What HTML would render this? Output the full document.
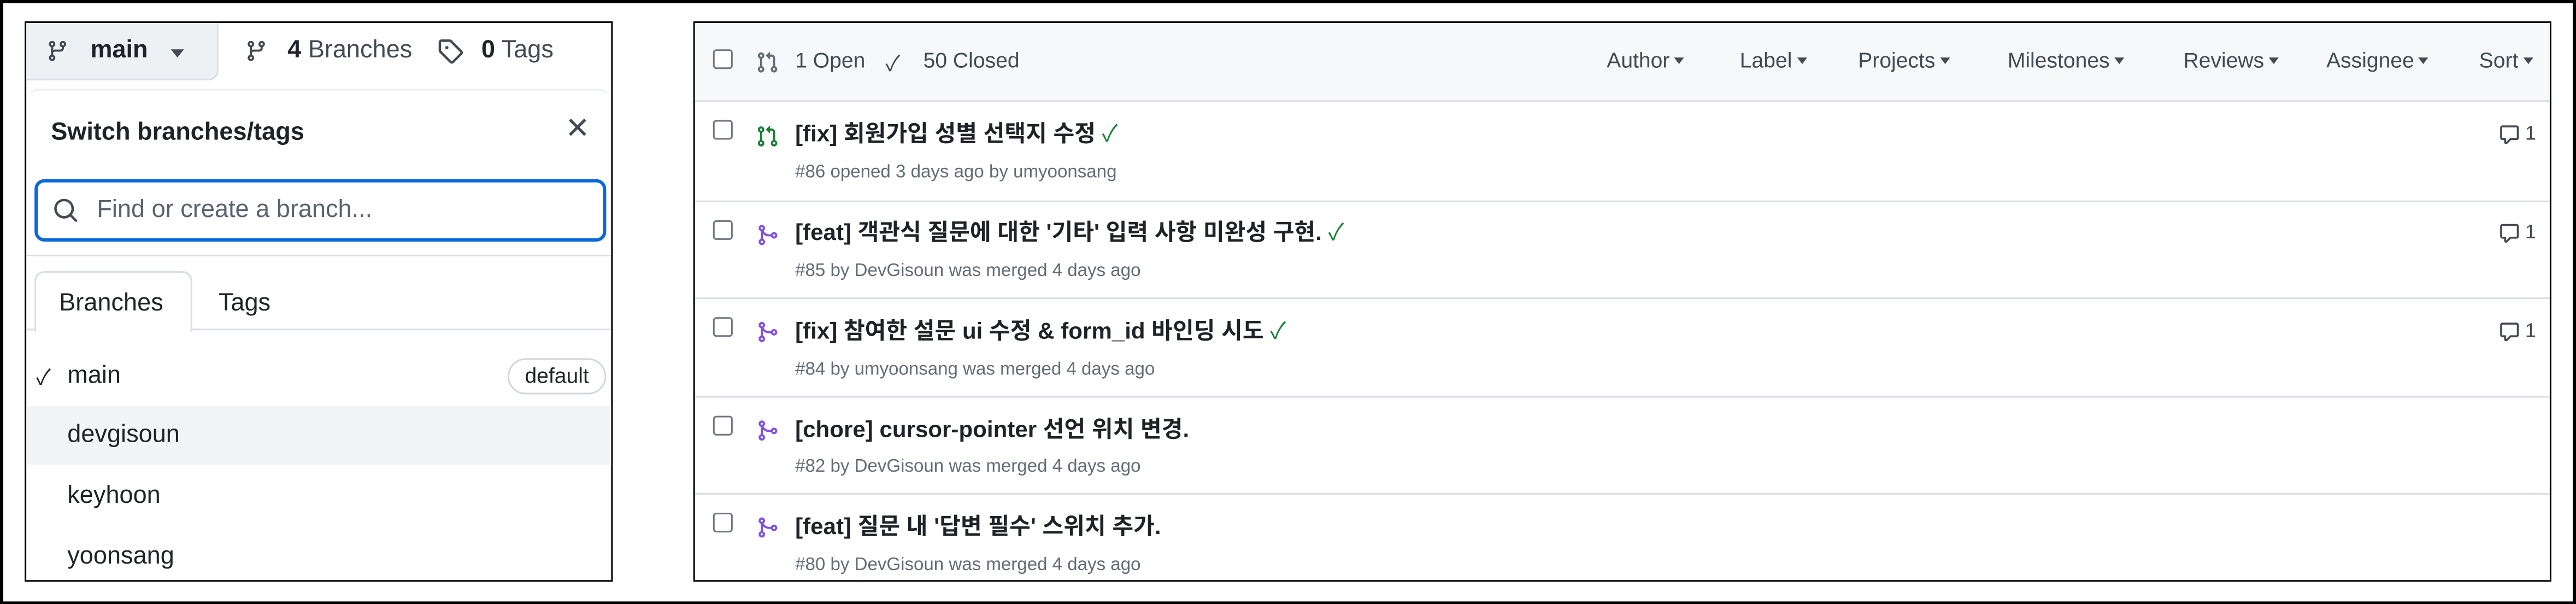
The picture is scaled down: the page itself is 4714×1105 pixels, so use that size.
<!DOCTYPE html>
<html><head><meta charset="utf-8"><style>
html,body{margin:0;padding:0;background:#fff;}
body{width:4714px;height:1105px;overflow:hidden;position:relative;}
#s{position:absolute;left:0;top:0;width:1568px;height:367.6px;transform:scale(3.0064);transform-origin:0 0;font-family:"Liberation Sans","Noto Sans CJK KR",sans-serif;color:#1f2328;}
.a{position:absolute;white-space:nowrap;}
.frame{position:absolute;left:0;top:0;width:1564px;height:363.6px;border:2px solid #000;}
.box{position:absolute;border:1px solid #000;background:#fff;overflow:hidden;}
.cb{position:absolute;width:10px;height:10px;border:1px solid #6e7781;border-radius:2px;background:#fff;}
.t{font-size:14px;font-weight:bold;}
.m{font-size:11px;color:#636c76;}
.f{font-size:13px;color:#424a53;}
.f:after{content:"";display:inline-block;margin-left:3px;border-left:3.5px solid transparent;border-right:3.5px solid transparent;border-top:4px solid #424a53;vertical-align:2px;}
.hr{position:absolute;left:0;right:0;height:1px;background:#d8dee4;}
.ok{color:#1a7f37;font-weight:normal;}
</style></head><body><div id="s">
<div class="frame"></div>

<!-- left panel -->
<div class="box" style="left:15px;top:13px;width:356px;height:339px;">
  <div class="a" style="left:0;top:0;width:116px;height:34px;background:#eef1f4;border-radius:0 0 6px 0;border:1px solid #d8dee4;border-top:none;border-left:none;"></div>
  <svg class="a" style="left:12px;top:9px" width="14" height="16" viewBox="0 0 16 16"><path fill="#424a53" d="M9.5 3.25a2.25 2.25 0 1 1 3 2.122V6A2.5 2.5 0 0 1 10 8.5H6a1 1 0 0 0-1 1v1.128a2.251 2.251 0 1 1-1.5 0V5.372a2.25 2.25 0 1 1 1.5 0v1.836A2.493 2.493 0 0 1 6 7h4a1 1 0 0 0 1-1v-.628A2.25 2.25 0 0 1 9.5 3.25Zm-6 0a.75.75 0 1 0 1.5 0 .75.75 0 0 0-1.5 0Zm8.25-.75a.75.75 0 1 0 0 1.5.75.75 0 0 0 0-1.5ZM4.25 12a.75.75 0 1 0 0 1.5.75.75 0 0 0 0-1.5Z"/></svg>
  <div class="a" style="left:39px;top:8px;font-size:15px;font-weight:bold;">main</div>
  <div class="a" style="left:88px;top:16px;border-left:4px solid transparent;border-right:4px solid transparent;border-top:5px solid #424a53;"></div>
  <svg class="a" style="left:133px;top:9px" width="14" height="16" viewBox="0 0 16 16"><path fill="#424a53" d="M9.5 3.25a2.25 2.25 0 1 1 3 2.122V6A2.5 2.5 0 0 1 10 8.5H6a1 1 0 0 0-1 1v1.128a2.251 2.251 0 1 1-1.5 0V5.372a2.25 2.25 0 1 1 1.5 0v1.836A2.493 2.493 0 0 1 6 7h4a1 1 0 0 0 1-1v-.628A2.25 2.25 0 0 1 9.5 3.25Zm-6 0a.75.75 0 1 0 1.5 0 .75.75 0 0 0-1.5 0Zm8.25-.75a.75.75 0 1 0 0 1.5.75.75 0 0 0 0-1.5ZM4.25 12a.75.75 0 1 0 0 1.5.75.75 0 0 0 0-1.5Z"/></svg>
  <div class="a" style="left:159px;top:8px;font-size:15px;color:#424a53;"><b style="color:#1f2328">4</b> Branches</div>
  <svg class="a" style="left:250px;top:9px" width="16" height="16" viewBox="0 0 16 16"><path fill="#424a53" d="M1 7.775V2.750C1 1.784 1.784 1 2.75 1h5.025c.464 0 .91.184 1.238.513l6.25 6.25a1.75 1.75 0 0 1 0 2.474l-5.026 5.026a1.75 1.75 0 0 1-2.474 0l-6.25-6.25A1.752 1.752 0 0 1 1 7.775Zm1.5 0c0 .066.026.13.073.177l6.25 6.25a.25.25 0 0 0 .354 0l5.025-5.025a.25.25 0 0 0 0-.354l-6.25-6.25a.25.25 0 0 0-.177-.073H2.75a.25.25 0 0 0-.25.25ZM6 5a1 1 0 1 1 0 2 1 1 0 0 1 0-2Z"/></svg>
  <div class="a" style="left:277px;top:8px;font-size:15px;color:#424a53;"><b style="color:#1f2328">0</b> Tags</div>
  <div class="a" style="left:0;top:40px;width:356px;height:300px;border-top:1px solid #eaeef2;border-radius:8px 8px 0 0;"></div>
  <div class="a" style="left:15px;top:58px;font-size:15px;font-weight:bold;">Switch branches/tags</div>
  <div class="a" style="left:328px;top:54px;font-size:18px;color:#424a53;">✕</div>
  <div class="a" style="left:5px;top:95px;width:344px;height:34px;border:2px solid #0969da;border-radius:6px;"></div>
  <svg class="a" style="left:16px;top:106px" width="16" height="16" viewBox="0 0 16 16"><path fill="#424a53" d="M10.68 11.74a6 6 0 0 1-7.922-8.982 6 6 0 0 1 8.982 7.922l3.04 3.04a.749.749 0 0 1-.326 1.275.749.749 0 0 1-.734-.215ZM11.5 7a4.499 4.499 0 1 0-8.997 0A4.499 4.499 0 0 0 11.5 7Z"/></svg>
  <div class="a" style="left:43px;top:105px;font-size:15px;color:#59636e;">Find or create a branch...</div>
  <div class="a" style="left:0;top:141px;width:356px;height:1px;background:#d8dee4;"></div>
  <div class="a" style="left:0;top:186px;width:356px;height:1px;background:#d8dee4;"></div>
  <div class="a" style="left:5px;top:151px;width:94px;height:36px;border:1px solid #d8dee4;border-bottom:none;border-radius:6px 6px 0 0;background:#fff;"></div>
  <div class="a" style="left:20px;top:162px;font-size:15px;">Branches</div>
  <div class="a" style="left:117px;top:162px;font-size:15px;">Tags</div>
  <div class="a" style="left:6px;top:205px;font-size:13px;">✓</div>
  <div class="a" style="left:25px;top:206px;font-size:15px;">main</div>
  <div class="a" style="left:293px;top:204px;width:58px;height:20px;border:1px solid #d0d7de;border-radius:11px;font-size:13px;text-align:center;line-height:20px;">default</div>
  <div class="a" style="left:0;top:233px;width:356px;height:36px;background:#f3f4f6;"></div>
  <div class="a" style="left:25px;top:242px;font-size:15px;">devgisoun</div>
  <div class="a" style="left:25px;top:279px;font-size:15px;">keyhoon</div>
  <div class="a" style="left:25px;top:316px;font-size:15px;">yoonsang</div>
</div>

<!-- right panel -->
<div class="box" style="left:422px;top:13px;width:1129px;height:339px;">
  <div class="a" style="left:0;top:0;width:1129px;height:47px;background:#f6f8fa;"></div>
  <div class="hr" style="top:47px"></div>
  <div class="cb" style="left:11px;top:16px"></div>
  <svg class="a" style="left:37px;top:16px" width="14" height="16" viewBox="0 0 16 16"><path fill="#636c76" d="M1.5 3.25a2.25 2.25 0 1 1 3 2.122v5.256a2.251 2.251 0 1 1-1.5 0V5.372A2.25 2.25 0 0 1 1.5 3.25Zm5.677-.177L9.573.677A.25.25 0 0 1 10 .854V2.5h1A2.5 2.5 0 0 1 13.5 5v5.628a2.251 2.251 0 1 1-1.5 0V5a1 1 0 0 0-1-1h-1v1.646a.25.25 0 0 1-.427.177L7.177 3.427a.25.25 0 0 1 0-.354ZM3.75 2.5a.75.75 0 1 0 0 1.5.75.75 0 0 0 0-1.5Zm0 9.5a.75.75 0 1 0 0 1.5.75.75 0 0 0 0-1.5Zm8.25.75a.75.75 0 1 0 1.5 0 .75.75 0 0 0-1.5 0Z"/></svg>
  <div class="a" style="left:61px;top:15px;font-size:13px;color:#424a53;">1 Open</div>
  <div class="a" style="left:116px;top:14px;font-size:13px;color:#424a53;">✓</div>
  <div class="a" style="left:139px;top:15px;font-size:13px;color:#424a53;">50 Closed</div>
  <div class="a f" style="left:555px;top:15px">Author</div>
  <div class="a f" style="left:636px;top:15px">Label</div>
  <div class="a f" style="left:708px;top:15px">Projects</div>
  <div class="a f" style="left:799px;top:15px">Milestones</div>
  <div class="a f" style="left:906px;top:15px">Reviews</div>
  <div class="a f" style="left:993px;top:15px">Assignee</div>
  <div class="a f" style="left:1086px;top:15px">Sort</div>

  <!-- rows -->
  <div class="cb" style="left:11px;top:59px"></div>
  <svg class="a" style="left:37px;top:61px" width="14" height="16" viewBox="0 0 16 16"><path fill="#1a7f37" d="M1.5 3.25a2.25 2.25 0 1 1 3 2.122v5.256a2.251 2.251 0 1 1-1.5 0V5.372A2.25 2.25 0 0 1 1.5 3.25Zm5.677-.177L9.573.677A.25.25 0 0 1 10 .854V2.5h1A2.5 2.5 0 0 1 13.5 5v5.628a2.251 2.251 0 1 1-1.5 0V5a1 1 0 0 0-1-1h-1v1.646a.25.25 0 0 1-.427.177L7.177 3.427a.25.25 0 0 1 0-.354ZM3.75 2.5a.75.75 0 1 0 0 1.5.75.75 0 0 0 0-1.5Zm0 9.5a.75.75 0 1 0 0 1.5.75.75 0 0 0 0-1.5Zm8.25.75a.75.75 0 1 0 1.5 0 .75.75 0 0 0-1.5 0Z"/></svg>
  <div class="a t" style="left:61px;top:57px">[fix] 회원가입 성별 선택지 수정 <span class="ok">✓</span></div>
  <div class="a m" style="left:61px;top:85px">#86 opened 3 days ago by umyoonsang</div>
  <div class="hr" style="top:108px"></div>

  <div class="cb" style="left:11px;top:120px"></div>
  <svg class="a" style="left:37px;top:121px" width="14" height="16" viewBox="0 0 16 16"><path fill="#8250df" d="M5.45 5.154A4.25 4.25 0 0 0 9.25 7.5h1.378a2.251 2.251 0 1 1 0 1.5H9.25A5.734 5.734 0 0 1 5 7.123v3.505a2.25 2.25 0 1 1-1.5 0V5.372a2.25 2.25 0 1 1 1.95-.218ZM4.25 13.5a.75.75 0 1 0 0-1.5.75.75 0 0 0 0 1.5Zm8.5-4.5a.75.75 0 1 0 0-1.5.75.75 0 0 0 0 1.5ZM5 3.25a.75.75 0 1 0 0 .005V3.25Z"/></svg>
  <div class="a t" style="left:61px;top:117px">[feat] 객관식 질문에 대한 '기타' 입력 사항 미완성 구현. <span class="ok">✓</span></div>
  <div class="a m" style="left:61px;top:145px">#85 by DevGisoun was merged 4 days ago</div>
  <div class="hr" style="top:167px"></div>

  <div class="cb" style="left:11px;top:179px"></div>
  <svg class="a" style="left:37px;top:180px" width="14" height="16" viewBox="0 0 16 16"><path fill="#8250df" d="M5.45 5.154A4.25 4.25 0 0 0 9.25 7.5h1.378a2.251 2.251 0 1 1 0 1.5H9.25A5.734 5.734 0 0 1 5 7.123v3.505a2.25 2.25 0 1 1-1.5 0V5.372a2.25 2.25 0 1 1 1.95-.218ZM4.25 13.5a.75.75 0 1 0 0-1.5.75.75 0 0 0 0 1.5Zm8.5-4.5a.75.75 0 1 0 0-1.5.75.75 0 0 0 0 1.5ZM5 3.25a.75.75 0 1 0 0 .005V3.25Z"/></svg>
  <div class="a t" style="left:61px;top:177px">[fix] 참여한 설문 ui 수정 &amp; form_id 바인딩 시도 <span class="ok">✓</span></div>
  <div class="a m" style="left:61px;top:205px">#84 by umyoonsang was merged 4 days ago</div>
  <div class="hr" style="top:227px"></div>

  <div class="cb" style="left:11px;top:239px"></div>
  <svg class="a" style="left:37px;top:240px" width="14" height="16" viewBox="0 0 16 16"><path fill="#8250df" d="M5.45 5.154A4.25 4.25 0 0 0 9.25 7.5h1.378a2.251 2.251 0 1 1 0 1.5H9.25A5.734 5.734 0 0 1 5 7.123v3.505a2.25 2.25 0 1 1-1.5 0V5.372a2.25 2.25 0 1 1 1.95-.218ZM4.25 13.5a.75.75 0 1 0 0-1.5.75.75 0 0 0 0 1.5Zm8.5-4.5a.75.75 0 1 0 0-1.5.75.75 0 0 0 0 1.5ZM5 3.25a.75.75 0 1 0 0 .005V3.25Z"/></svg>
  <div class="a t" style="left:61px;top:237px">[chore] cursor-pointer 선언 위치 변경.</div>
  <div class="a m" style="left:61px;top:264px">#82 by DevGisoun was merged 4 days ago</div>
  <div class="hr" style="top:286px"></div>

  <div class="cb" style="left:11px;top:298px"></div>
  <svg class="a" style="left:37px;top:299px" width="14" height="16" viewBox="0 0 16 16"><path fill="#8250df" d="M5.45 5.154A4.25 4.25 0 0 0 9.25 7.5h1.378a2.251 2.251 0 1 1 0 1.5H9.25A5.734 5.734 0 0 1 5 7.123v3.505a2.25 2.25 0 1 1-1.5 0V5.372a2.25 2.25 0 1 1 1.95-.218ZM4.25 13.5a.75.75 0 1 0 0-1.5.75.75 0 0 0 0 1.5Zm8.5-4.5a.75.75 0 1 0 0-1.5.75.75 0 0 0 0 1.5ZM5 3.25a.75.75 0 1 0 0 .005V3.25Z"/></svg>
  <div class="a t" style="left:61px;top:296px">[feat] 질문 내 '답변 필수' 스위치 추가.</div>
  <div class="a m" style="left:61px;top:324px">#80 by DevGisoun was merged 4 days ago</div>

  <!-- comments -->
  <svg class="a" style="left:1098px;top:61px" width="13" height="14" viewBox="0 0 16 16"><path fill="#424a53" d="M1 2.75C1 1.784 1.784 1 2.75 1h10.5c.966 0 1.75.784 1.75 1.75v7.5A1.75 1.75 0 0 1 13.25 12H9.06l-2.573 2.573A1.458 1.458 0 0 1 4 13.543V12H2.75A1.75 1.75 0 0 1 1 10.25Zm1.75-.25a.25.25 0 0 0-.25.25v7.5c0 .138.112.25.25.25h2a.75.75 0 0 1 .75.75v2.19l2.72-2.720a.749.749 0 0 1 .53-.22h4.5a.25.25 0 0 0 .25-.25v-7.5a.25.25 0 0 0-.25-.25Z"/></svg>
  <div class="a" style="left:1114px;top:60px;font-size:12px;color:#424a53;">1</div>
  <svg class="a" style="left:1098px;top:121px" width="13" height="14" viewBox="0 0 16 16"><path fill="#424a53" d="M1 2.75C1 1.784 1.784 1 2.75 1h10.5c.966 0 1.75.784 1.75 1.75v7.5A1.75 1.75 0 0 1 13.25 12H9.06l-2.573 2.573A1.458 1.458 0 0 1 4 13.543V12H2.75A1.75 1.75 0 0 1 1 10.25Zm1.75-.25a.25.25 0 0 0-.25.25v7.5c0 .138.112.25.25.25h2a.75.75 0 0 1 .75.75v2.19l2.72-2.72a.749.749 0 0 1 .53-.22h4.5a.25.25 0 0 0 .25-.25v-7.5a.25.25 0 0 0-.25-.25Z"/></svg>
  <div class="a" style="left:1114px;top:120px;font-size:12px;color:#424a53;">1</div>
  <svg class="a" style="left:1098px;top:181px" width="13" height="14" viewBox="0 0 16 16"><path fill="#424a53" d="M1 2.75C1 1.784 1.784 1 2.75 1h10.5c.966 0 1.75.784 1.75 1.75v7.5A1.75 1.75 0 0 1 13.25 12H9.06l-2.573 2.573A1.458 1.458 0 0 1 4 13.543V12H2.75A1.75 1.75 0 0 1 1 10.25Zm1.75-.25a.25.25 0 0 0-.25.25v7.5c0 .138.112.25.25.25h2a.75.75 0 0 1 .75.75v2.19l2.72-2.72a.749.749 0 0 1 .53-.22h4.5a.25.25 0 0 0 .25-.25v-7.5a.25.25 0 0 0-.25-.25Z"/></svg>
  <div class="a" style="left:1114px;top:180px;font-size:12px;color:#424a53;">1</div>
</div>
</div></body></html>
